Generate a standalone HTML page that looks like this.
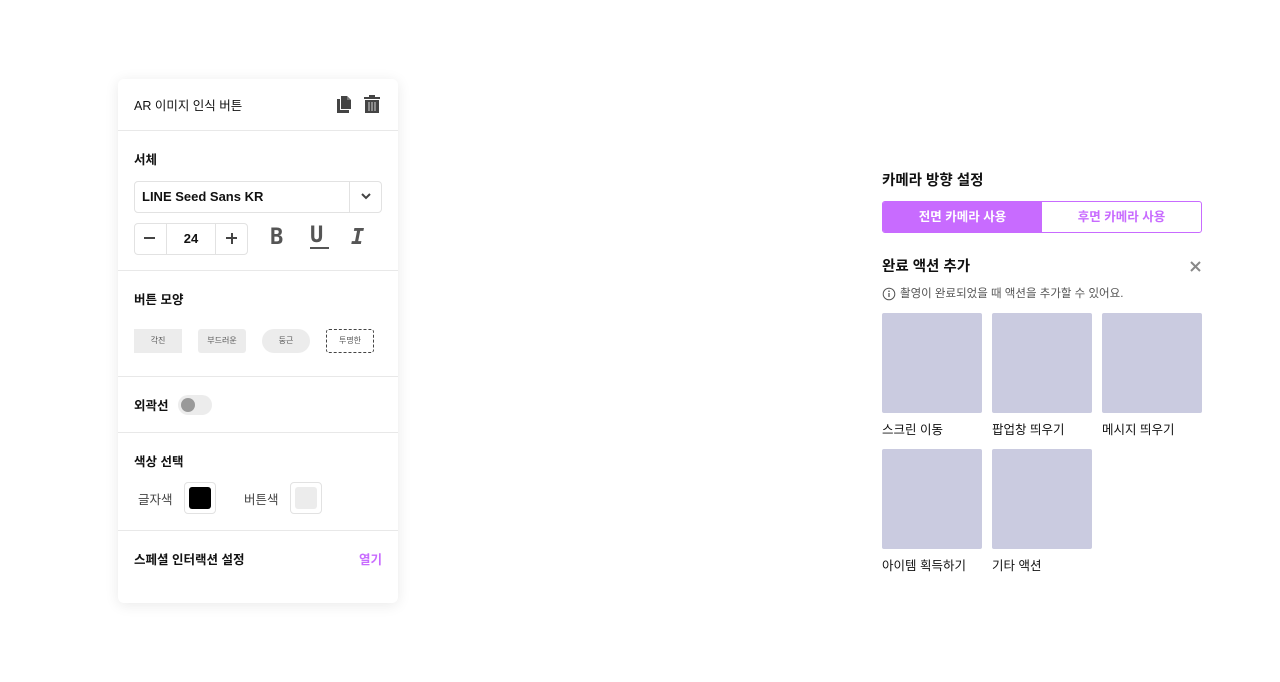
<!DOCTYPE html><html><head><meta charset="utf-8"><style>
*{box-sizing:border-box;margin:0;padding:0}
body{width:1280px;height:682px;background:#fff;font-family:"Liberation Sans","Noto Sans CJK KR",sans-serif;color:#111;position:relative;overflow:hidden}
.a{position:absolute}
.panel{left:118px;top:79px;width:280px;height:524px;background:#fff;border-radius:6px;box-shadow:0 2px 14px rgba(0,0,0,.09)}
.hr{position:absolute;left:0;width:280px;height:1px;background:#e8e8e8}
.t{font-size:12.5px;font-weight:bold}
.box{border:1px solid #e2e2e2;border-radius:4px;position:absolute}
.shape{position:absolute;top:250px;width:48px;height:24px;background:#ececec;font-size:8px;color:#555;text-align:center;line-height:24px}
.tile{position:absolute;width:100px;height:100px;background:#cacbe0;border-radius:2px}
.lab{position:absolute;font-size:12.5px}
</style></head><body>
<div class="a panel">
 <div class="a" style="left:16px;top:16px;font-size:12.5px">AR 이미지 인식 버튼</div>
 <svg class="a" style="left:217px;top:16px" width="18" height="19" viewBox="0 0 18 19"><path d="M2 4h3v11h9v3H2z" fill="#444"/><path d="M6 1h6l4 4v9H6z" fill="#444"/><path d="M12 1v4h4" fill="#777"/></svg>
 <svg class="a" style="left:245px;top:16px" width="18" height="19" viewBox="0 0 18 19"><rect x="1" y="2" width="16" height="2" fill="#444"/><rect x="6" y="0" width="6" height="2" fill="#444"/><path d="M2 5h14v13H2z" fill="#444"/><path d="M6 7v9M9 7v9M12 7v9" stroke="#bbb" stroke-width="1.2"/></svg>
 <div class="hr" style="top:51px"></div>
 <div class="a t" style="left:16px;top:70px">서체</div>
 <div class="box" style="left:16px;top:102px;width:248px;height:32px"></div>
 <div class="a" style="left:24px;top:110px;font-size:13px;font-weight:bold">LINE Seed Sans KR</div>
 <div class="a" style="left:231px;top:103px;width:1px;height:30px;background:#e2e2e2"></div>
 <svg class="a" style="left:243px;top:113px" width="10" height="8"><path d="M1 2l4 4 4-4" stroke="#444" stroke-width="2" fill="none"/></svg>
 <div class="box" style="left:16px;top:144px;width:114px;height:32px"></div>
 <div class="a" style="left:48px;top:145px;width:1px;height:30px;background:#e2e2e2"></div>
 <div class="a" style="left:97px;top:145px;width:1px;height:30px;background:#e2e2e2"></div>
 <div class="a" style="left:26px;top:158px;width:11px;height:2px;background:#444"></div>
 <div class="a" style="left:57px;top:152px;width:32px;text-align:center;font-size:13px;font-weight:bold">24</div>
 <div class="a" style="left:108px;top:158px;width:11px;height:2px;background:#444"></div>
 <div class="a" style="left:112.5px;top:153.5px;width:2px;height:11px;background:#444"></div>
 <div class="a" style="left:152px;top:146px;font-size:22px;color:#555;font-weight:bold;font-family:'DejaVu Sans Mono',monospace">B</div>
 <div class="a" style="left:192px;top:144px;font-size:22px;color:#555;font-weight:bold;font-family:'DejaVu Sans Mono',monospace">U</div>
 <div class="a" style="left:192px;top:168px;width:19px;height:2px;background:#555"></div>
 <div class="a" style="left:233px;top:146px;font-size:22px;color:#555;font-weight:bold;font-style:italic;font-family:'DejaVu Sans Mono',monospace">I</div>
 <div class="hr" style="top:191px"></div>
 <div class="a t" style="left:16px;top:210px">버튼 모양</div>
 <div class="shape" style="left:16px">각진</div>
 <div class="shape" style="left:80px;border-radius:3px">부드러운</div>
 <div class="shape" style="left:144px;border-radius:12px">둥근</div>
 <div class="shape" style="left:208px;background:#fff;border:1px dashed #444;border-radius:3px;line-height:22px">투명한</div>
 <div class="hr" style="top:297px"></div>
 <div class="a t" style="left:16px;top:316px">외곽선</div>
 <div class="a" style="left:60px;top:316px;width:34px;height:20px;border-radius:10px;background:#ececec"></div>
 <div class="a" style="left:63px;top:319px;width:14px;height:14px;border-radius:7px;background:#999"></div>
 <div class="hr" style="top:353px"></div>
 <div class="a t" style="left:16px;top:372px">색상 선택</div>
 <div class="a" style="left:20px;top:410px;font-size:12.5px;color:#444">글자색</div>
 <div class="box" style="left:66px;top:403px;width:32px;height:32px"></div>
 <div class="a" style="left:71px;top:408px;width:22px;height:22px;background:#000;border-radius:3px"></div>
 <div class="a" style="left:126px;top:410px;font-size:12.5px;color:#444">버튼색</div>
 <div class="box" style="left:172px;top:403px;width:32px;height:32px"></div>
 <div class="a" style="left:177px;top:408px;width:22px;height:22px;background:#ececec;border-radius:3px"></div>
 <div class="hr" style="top:451px"></div>
 <div class="a t" style="left:16px;top:470px">스페셜 인터랙션 설정</div>
 <div class="a t" style="left:241px;top:470px;color:#c86bff">열기</div>
</div>

<div class="a" style="left:882px;top:169px;font-size:14.5px;font-weight:bold">카메라 방향 설정</div>
<div class="a" style="left:882px;top:201px;width:320px;height:32px;border:1px solid #c86bff;border-radius:3px;overflow:hidden">
 <div class="a" style="left:0;top:0;width:159px;height:30px;background:#c86bff;color:#fff;font-size:12.5px;font-weight:bold;text-align:center;line-height:30px">전면 카메라 사용</div>
 <div class="a" style="left:159px;top:0;width:159px;height:30px;color:#c86bff;font-size:12.5px;font-weight:bold;text-align:center;line-height:30px">후면 카메라 사용</div>
</div>
<div class="a" style="left:882px;top:255px;font-size:14.5px;font-weight:bold">완료 액션 추가</div>
<svg class="a" style="left:1190px;top:261px" width="11" height="11"><path d="M1 1l9 9M10 1l-9 9" stroke="#888" stroke-width="2"/></svg>
<svg class="a" style="left:882px;top:287px" width="14" height="14"><circle cx="7" cy="7" r="5.8" stroke="#555" fill="none"/><path d="M7 6v4" stroke="#555" stroke-width="1.3"/><circle cx="7" cy="4.2" r=".8" fill="#555"/></svg>
<div class="a" style="left:900px;top:285px;font-size:11.5px;color:#555">촬영이 완료되었을 때 액션을 추가할 수 있어요.</div>
<div class="tile" style="left:882px;top:313px"></div>
<div class="tile" style="left:992px;top:313px"></div>
<div class="tile" style="left:1102px;top:313px"></div>
<div class="lab" style="left:882px;top:419px">스크린 이동</div>
<div class="lab" style="left:992px;top:419px">팝업창 띄우기</div>
<div class="lab" style="left:1102px;top:419px">메시지 띄우기</div>
<div class="tile" style="left:882px;top:449px"></div>
<div class="tile" style="left:992px;top:449px"></div>
<div class="lab" style="left:882px;top:555px">아이템 획득하기</div>
<div class="lab" style="left:992px;top:555px">기타 액션</div>
</body></html>
